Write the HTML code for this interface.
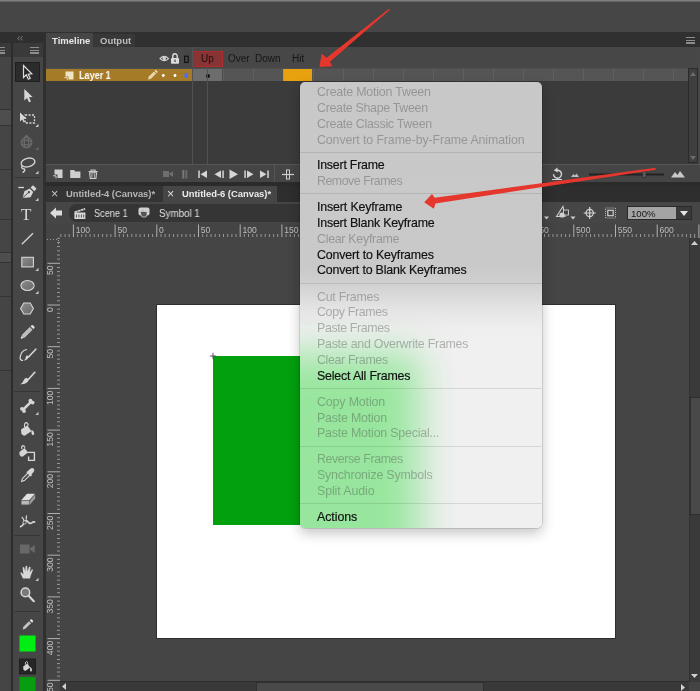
<!DOCTYPE html>
<html><head><meta charset="utf-8">
<style>
html,body{margin:0;padding:0;}
body{width:700px;height:691px;overflow:hidden;background:#444444;position:relative;font-family:"Liberation Sans",sans-serif;}
.a{position:absolute;}
.t{position:absolute;white-space:nowrap;line-height:1;will-change:transform;transform-origin:0 50%;}
svg{position:absolute;overflow:visible;}
/* menu */
#menu{left:300px;top:82px;width:242px;height:446px;border-radius:5px;overflow:hidden;box-shadow:0 5px 13px rgba(0,0,0,.24),0 0 0 0.5px rgba(0,0,0,.22);}
#menu .mi{will-change:transform;position:absolute;left:17px;font-size:12.4px;line-height:16px;height:16px;white-space:nowrap;color:#111;letter-spacing:0.05px;}
#menu .mi{-webkit-text-stroke:0.18px #111;}
#menu .d{color:rgba(60,60,60,.36);-webkit-text-stroke:0;}
#menu .sep{position:absolute;left:0;width:242px;height:1px;background:rgba(0,0,0,.10);}
</style></head><body>

<!-- top area -->
<div class="a" style="left:0;top:0;width:700px;height:32px;background:#464646"></div>
<div class="a" style="left:0;top:0;width:700px;height:2px;background:linear-gradient(#8a8a8a,#5a5a5a)"></div>

<!-- left column header -->
<div class="a" style="left:0;top:32px;width:46px;height:11px;background:#2f2f2f"></div>
<div class="a" style="left:0;top:43px;width:46px;height:14px;background:#3a3a3a"></div>
<div class="a" style="left:0;top:57px;width:11px;height:634px;background:#454545"></div>
<div class="a" style="left:11px;top:43px;width:2px;height:648px;background:#2c2c2c"></div>
<div class="a" style="left:13px;top:57px;width:30px;height:634px;background:#464646"></div>
<div class="a" style="left:43px;top:32px;width:3px;height:659px;background:#303030"></div>
<svg style="left:16.5px;top:36px" width="6.6" height="4.6" viewBox="0 0 8 6"><path d="M3 0.3 L0.8 3 L3 5.7 M6.8 0.3 L4.6 3 L6.8 5.7" fill="none" stroke="#8c8c8c" stroke-width="1.1"/></svg>

<!-- timeline panel -->
<div class="a" style="left:46px;top:32px;width:654px;height:15px;background:#303030"></div>
<div class="a" style="left:46px;top:33px;width:47px;height:14px;background:#464646"></div>
<div class="a" style="left:93px;top:34px;width:42px;height:13px;background:#383838"></div>
<div class="t" style="left:52px;top:36px;font-size:9.5px;font-weight:bold;color:#e8e8e8">Timeline</div>
<div class="t" style="left:100px;top:36px;font-size:9.5px;font-weight:bold;color:#bdbdbd">Output</div>
<div class="a" style="left:46px;top:47px;width:654px;height:22px;background:#474747"></div>
<div class="a" style="left:46px;top:69px;width:654px;height:95px;background:#3b3b3b"></div>


<!-- timeline header icons -->
<svg style="left:157px;top:52px" width="36" height="13" viewBox="0 0 36 13">
 <path d="M3 6.6 Q7.2 2 11.5 6.6 Q7.2 10.8 3 6.6Z" fill="none" stroke="#d0d0d0" stroke-width="1.2"/>
 <circle cx="7.2" cy="6.4" r="1.8" fill="#d0d0d0"/>
 <rect x="14" y="6" width="8" height="5.8" rx="0.8" fill="#dcdcdc"/>
 <path d="M15.8 6 V4 a2.2 2.2 0 0 1 4.4 0 V6" fill="none" stroke="#dcdcdc" stroke-width="1.4"/>
 <rect x="17.3" y="7.6" width="1.4" height="2.4" fill="#555"/>
 <rect x="27.6" y="4.2" width="3.6" height="6.2" fill="none" stroke="#121212" stroke-width="1.2"/>
</svg>
<!-- playhead box -->
<div class="a" style="left:192px;top:51px;width:31px;height:16px;background:#893434;border:1px solid #b02c2c;box-sizing:border-box"></div>
<div class="t" style="left:201px;top:54px;font-size:10px;color:#1c1010">Up</div>
<div class="t" style="left:228px;top:54px;font-size:10px;color:#161616">Over</div>
<div class="t" style="left:255px;top:54px;font-size:10px;color:#161616">Down</div>
<div class="t" style="left:292px;top:54px;font-size:10px;color:#161616">Hit</div>
<!-- layer row -->
<div class="a" style="left:46px;top:69px;width:146px;height:12px;background:#a67b27"></div>
<svg style="left:64px;top:71px" width="10" height="9" viewBox="0 0 10 9"><path d="M1.5 0.5 H9.5 V8.5 H4.5 V5.5 H1.5Z" fill="#efe3c6"/><path d="M0.3 6.6 H3.3 V8.8" fill="none" stroke="#efe3c6" stroke-width="0.9"/></svg>
<div class="t" style="left:78.5px;top:70.5px;font-size:10.4px;font-weight:bold;color:#fff;transform:scaleX(.87)">Layer 1</div>
<svg style="left:147px;top:69px" width="46" height="12" viewBox="0 0 46 12">
 <path d="M1 10.6 L1.8 7.6 L7 2.4 L9.2 4.6 L4 9.8Z" fill="#e8d7a8"/><path d="M7.6 1.8 L8.6 0.8 L10.8 3 L9.8 4Z" fill="#f6ecd0"/>
 <circle cx="16.3" cy="6.5" r="1.4" fill="#fff"/><circle cx="28" cy="6.5" r="1.4" fill="#fff"/>
 <rect x="37.5" y="4" width="3.6" height="5" rx="1" fill="#4f6df0"/>
</svg>
<!-- frames -->
<div class="a" style="left:192px;top:69px;width:497px;height:12px;background:#555555"></div>
<div class="a" style="left:193px;top:69px;width:29px;height:12px;background:#6d6d6d"></div>
<div class="a" style="left:283px;top:69px;width:29px;height:12px;background:#e9a20f"></div>
<div class="a" style="left:192px;top:69px;width:497px;height:12px;background:repeating-linear-gradient(90deg,rgba(0,0,0,0) 0,rgba(0,0,0,0) 29px,rgba(125,125,125,.28) 29px,rgba(125,125,125,.28) 30px);background-position:2px 0"></div>
<div class="a" style="left:222px;top:69px;width:1px;height:12px;background:#4a4a4a"></div>
<div class="a" style="left:205.5px;top:74px;width:4px;height:4px;border-radius:2px;background:#111"></div>
<div class="a" style="left:207px;top:66px;width:1px;height:98px;background:#b52626"></div>
<div class="a" style="left:192px;top:47px;width:1px;height:135px;background:#525252"></div>
<div class="a" style="left:46px;top:68px;width:654px;height:1px;background:#4f4f4f"></div>
<!-- timeline v scrollbar -->
<div class="a" style="left:688px;top:68px;width:10px;height:95px;background:#3f3f3f;border:1px solid #2b2b2b;box-sizing:border-box"></div><div class="a" style="left:698px;top:47px;width:2px;height:117px;background:#484848"></div>
<svg style="left:690px;top:72px" width="6" height="4" viewBox="0 0 6 4"><path d="M0 4 L3 0 L6 4Z" fill="#6c6c6c"/></svg>
<svg style="left:690px;top:156px" width="6" height="4" viewBox="0 0 6 4"><path d="M0 0 L3 4 L6 0Z" fill="#6c6c6c"/></svg>
<!-- panel menu icon -->
<div class="a" style="left:686px;top:36.5px;width:9px;height:7px;background:repeating-linear-gradient(#8c8c8c 0,#8c8c8c 1.4px,transparent 1.4px,transparent 2.6px)"></div>
<!-- timeline controls -->
<div class="a" style="left:46px;top:164px;width:654px;height:18px;background:#454545;border-top:1px solid #555;box-sizing:border-box"></div>
<div class="a" style="left:46px;top:182px;width:654px;height:4px;background:#2b2b2b"></div>
<div class="a" style="left:274px;top:165px;width:1px;height:17px;background:#555"></div>
<svg style="left:46px;top:164px" width="654" height="18" viewBox="0 0 654 18">
 <!-- new layer -->
 <path d="M8.5 5.5 H16.5 V14 H11.5 V10.5 H8.5Z" fill="#cfcfcf"/><path d="M7 11.8 H10 V14.4" fill="none" stroke="#cfcfcf" stroke-width="1"/>
 <!-- folder -->
 <path d="M24.2 6 H28.2 L29.2 7.5 H34.4 V14 H24.2Z" fill="#cfcfcf"/>
 <!-- trash -->
 <g transform="translate(2.6 0)"><path d="M40 7.5 H49 M42.5 7.3 V6 H46.5 V7.3" fill="none" stroke="#cfcfcf" stroke-width="1.1"/><path d="M41 8.8 H48 L47.3 14.5 H41.7Z" fill="none" stroke="#cfcfcf" stroke-width="1.1"/><path d="M43.3 9.5 V13.8 M45.7 9.5 V13.8" stroke="#cfcfcf" stroke-width="0.9"/></g>
 <!-- camera dim -->
 <path d="M117 7 H123 V13 H117Z M123.5 9.2 L127 7.2 V12.8 L123.5 10.8Z" fill="#6e6e6e"/>
 <!-- onion -->
 <rect x="136.3" y="6" width="2" height="8.5" fill="#777"/><rect x="139.3" y="6" width="2" height="8.5" fill="#6a6a6a"/>
 <!-- transport -->
 <g fill="#d6d6d6">
  <rect x="152.3" y="6.5" width="1.5" height="7.5"/><path d="M161 6.5 V14 L154.5 10.25Z"/>
  <path d="M175 6.5 V14 L168.5 10.25Z"/><rect x="176.3" y="6.5" width="1.5" height="7.5"/>
  <path d="M183.5 5.5 V15 L192 10.25Z"/>
  <rect x="198.3" y="6.5" width="1.5" height="7.5"/><path d="M201 6.5 V14 L207.5 10.25Z"/>
  <path d="M214 6.5 V14 L220.5 10.25Z"/><rect x="221.3" y="6.5" width="1.5" height="7.5"/>
 </g>
 <!-- center frame -->
 <path d="M236 10.5 H248" stroke="#cfcfcf" stroke-width="1.2"/><rect x="240.5" y="6" width="3" height="9" fill="none" stroke="#cfcfcf" stroke-width="1"/>
 <!-- loop -->
 <path d="M507.5 10.2 a4 4 0 1 0 3.6 -4 " fill="none" stroke="#d6d6d6" stroke-width="1.4"/><path d="M511.5 3.5 L507.8 6.3 L511.8 8.6Z" fill="#d6d6d6"/><path d="M506 15.5 H516" stroke="#d6d6d6" stroke-width="1"/>
 <!-- mountains -->
 <path d="M525 13 L527.5 10 L529 11.5 L530.5 9.5 L533 13Z" fill="#bdbdbd"/>
 <rect x="543" y="9.5" width="75" height="2" fill="#222"/>
 <rect x="596.5" y="7.5" width="3.5" height="6" fill="#5a5a5a" stroke="#2a2a2a" stroke-width="0.6"/>
 <path d="M625 13.5 L629 8 L631.5 11 L634 7 L639 13.5Z" fill="#c9c9c9"/>
</svg>

<!-- doc tabs -->
<div class="a" style="left:46px;top:186px;width:654px;height:16px;background:#2e2e2e"></div>
<div class="a" style="left:46px;top:186px;width:117px;height:16px;background:#343434"></div>
<div class="a" style="left:163px;top:186px;width:114px;height:16px;background:#464646"></div>
<div class="t" style="left:51px;top:188px;font-size:12.5px;color:#c8c8c8">×</div>
<div class="t" style="left:66px;top:189px;font-size:9.4px;font-weight:bold;color:#b6b6b6">Untitled-4 (Canvas)*</div>
<div class="t" style="left:167px;top:188px;font-size:12.5px;color:#dcdcdc">×</div>
<div class="t" style="left:182px;top:189px;font-size:9.4px;font-weight:bold;color:#ececec">Untitled-6 (Canvas)*</div>

<!-- edit bar -->
<div class="a" style="left:46px;top:202px;width:654px;height:21px;background:#464646"></div>
<div class="a" style="left:69px;top:204px;width:465px;height:18px;background:#353535;border-radius:8px 0 0 8px"></div>
<svg style="left:46px;top:202px" width="654" height="21" viewBox="0 0 654 21">
 <path d="M4 11 L10 5.5 V8.5 H16 V13.5 H10 V16.5Z" fill="#dcdcdc"/>
 <!-- clapper -->
 <g transform="translate(-3.6 0)"><path d="M32 10.5 H43 V17 H32Z" fill="#dadada"/><path d="M32 9.5 L42.5 6 L43 7.8 L32.4 11Z" fill="#dadada"/><path d="M34 12.5 V15.5 M36.5 12.5 V15.5 M39 12.5 V15.5 M41.3 12.5 V15.5" stroke="#353535" stroke-width="0.8"/>
 <path d="M34.5 8.3 L35.8 9.8 M37.5 7.3 L38.8 8.8 M40.3 6.4 L41.5 7.8" stroke="#353535" stroke-width="0.9"/></g>
 <!-- symbol btn -->
 <g transform="translate(-2 0)"><rect x="94.5" y="5.5" width="11" height="8" rx="2" fill="#d0d0d0"/><path d="M97 13 q-1.5 -3 0.5 -4 l1 1 v-3 h1 v2.5 h3.5 v3 l-1 2.5 h-4Z" fill="#555" stroke="#d8d8d8" stroke-width="0.7"/></g>
</svg>
<div class="t" style="left:94px;top:209px;font-size:10.2px;color:#e0e0e0;transform:scaleX(.9)">Scene 1</div>
<div class="t" style="left:159px;top:209px;font-size:10.2px;color:#e0e0e0;transform:scaleX(.96)">Symbol 1</div>
<!-- rulers -->
<div class="a" style="left:46px;top:223px;width:654px;height:15px;background:#444"></div>
<div class="a" style="left:46px;top:237px;width:14px;height:454px;background:#444"></div>
<svg style="left:46px;top:223px;will-change:transform" width="654" height="15" viewBox="46 0 654 15"><path d="M60.9 11 V15" stroke="#a6a6a6" stroke-width="0.85"/><path d="M65.1 11 V15" stroke="#a6a6a6" stroke-width="0.85"/><path d="M69.2 11 V15" stroke="#a6a6a6" stroke-width="0.85"/><path d="M73.4 1.5 V15" stroke="#bcbcbc" stroke-width="0.9"/><text x="75.7" y="9.5" font-size="8.6" fill="#bebebe" font-family="Liberation Sans, sans-serif">100</text><path d="M77.6 11 V15" stroke="#a6a6a6" stroke-width="0.85"/><path d="M81.7 11 V15" stroke="#a6a6a6" stroke-width="0.85"/><path d="M85.9 11 V15" stroke="#a6a6a6" stroke-width="0.85"/><path d="M90.1 11 V15" stroke="#a6a6a6" stroke-width="0.85"/><path d="M94.3 11 V15" stroke="#a6a6a6" stroke-width="0.85"/><path d="M98.4 11 V15" stroke="#a6a6a6" stroke-width="0.85"/><path d="M102.6 11 V15" stroke="#a6a6a6" stroke-width="0.85"/><path d="M106.8 11 V15" stroke="#a6a6a6" stroke-width="0.85"/><path d="M110.9 11 V15" stroke="#a6a6a6" stroke-width="0.85"/><path d="M115.1 1.5 V15" stroke="#bcbcbc" stroke-width="0.9"/><text x="117.4" y="9.5" font-size="8.6" fill="#bebebe" font-family="Liberation Sans, sans-serif">50</text><path d="M119.3 11 V15" stroke="#a6a6a6" stroke-width="0.85"/><path d="M123.4 11 V15" stroke="#a6a6a6" stroke-width="0.85"/><path d="M127.6 11 V15" stroke="#a6a6a6" stroke-width="0.85"/><path d="M131.8 11 V15" stroke="#a6a6a6" stroke-width="0.85"/><path d="M136.0 11 V15" stroke="#a6a6a6" stroke-width="0.85"/><path d="M140.1 11 V15" stroke="#a6a6a6" stroke-width="0.85"/><path d="M144.3 11 V15" stroke="#a6a6a6" stroke-width="0.85"/><path d="M148.5 11 V15" stroke="#a6a6a6" stroke-width="0.85"/><path d="M152.6 11 V15" stroke="#a6a6a6" stroke-width="0.85"/><path d="M156.8 1.5 V15" stroke="#bcbcbc" stroke-width="0.9"/><text x="159.1" y="9.5" font-size="8.6" fill="#bebebe" font-family="Liberation Sans, sans-serif">0</text><path d="M161.0 11 V15" stroke="#a6a6a6" stroke-width="0.85"/><path d="M165.1 11 V15" stroke="#a6a6a6" stroke-width="0.85"/><path d="M169.3 11 V15" stroke="#a6a6a6" stroke-width="0.85"/><path d="M173.5 11 V15" stroke="#a6a6a6" stroke-width="0.85"/><path d="M177.7 11 V15" stroke="#a6a6a6" stroke-width="0.85"/><path d="M181.8 11 V15" stroke="#a6a6a6" stroke-width="0.85"/><path d="M186.0 11 V15" stroke="#a6a6a6" stroke-width="0.85"/><path d="M190.2 11 V15" stroke="#a6a6a6" stroke-width="0.85"/><path d="M194.3 11 V15" stroke="#a6a6a6" stroke-width="0.85"/><path d="M198.5 1.5 V15" stroke="#bcbcbc" stroke-width="0.9"/><text x="200.8" y="9.5" font-size="8.6" fill="#bebebe" font-family="Liberation Sans, sans-serif">50</text><path d="M202.7 11 V15" stroke="#a6a6a6" stroke-width="0.85"/><path d="M206.8 11 V15" stroke="#a6a6a6" stroke-width="0.85"/><path d="M211.0 11 V15" stroke="#a6a6a6" stroke-width="0.85"/><path d="M215.2 11 V15" stroke="#a6a6a6" stroke-width="0.85"/><path d="M219.4 11 V15" stroke="#a6a6a6" stroke-width="0.85"/><path d="M223.5 11 V15" stroke="#a6a6a6" stroke-width="0.85"/><path d="M227.7 11 V15" stroke="#a6a6a6" stroke-width="0.85"/><path d="M231.9 11 V15" stroke="#a6a6a6" stroke-width="0.85"/><path d="M236.0 11 V15" stroke="#a6a6a6" stroke-width="0.85"/><path d="M240.2 1.5 V15" stroke="#bcbcbc" stroke-width="0.9"/><text x="242.5" y="9.5" font-size="8.6" fill="#bebebe" font-family="Liberation Sans, sans-serif">100</text><path d="M244.4 11 V15" stroke="#a6a6a6" stroke-width="0.85"/><path d="M248.5 11 V15" stroke="#a6a6a6" stroke-width="0.85"/><path d="M252.7 11 V15" stroke="#a6a6a6" stroke-width="0.85"/><path d="M256.9 11 V15" stroke="#a6a6a6" stroke-width="0.85"/><path d="M261.1 11 V15" stroke="#a6a6a6" stroke-width="0.85"/><path d="M265.2 11 V15" stroke="#a6a6a6" stroke-width="0.85"/><path d="M269.4 11 V15" stroke="#a6a6a6" stroke-width="0.85"/><path d="M273.6 11 V15" stroke="#a6a6a6" stroke-width="0.85"/><path d="M277.7 11 V15" stroke="#a6a6a6" stroke-width="0.85"/><path d="M281.9 1.5 V15" stroke="#bcbcbc" stroke-width="0.9"/><text x="284.2" y="9.5" font-size="8.6" fill="#bebebe" font-family="Liberation Sans, sans-serif">150</text><path d="M286.1 11 V15" stroke="#a6a6a6" stroke-width="0.85"/><path d="M290.2 11 V15" stroke="#a6a6a6" stroke-width="0.85"/><path d="M294.4 11 V15" stroke="#a6a6a6" stroke-width="0.85"/><path d="M298.6 11 V15" stroke="#a6a6a6" stroke-width="0.85"/><path d="M302.8 11 V15" stroke="#a6a6a6" stroke-width="0.85"/><path d="M306.9 11 V15" stroke="#a6a6a6" stroke-width="0.85"/><path d="M311.1 11 V15" stroke="#a6a6a6" stroke-width="0.85"/><path d="M315.3 11 V15" stroke="#a6a6a6" stroke-width="0.85"/><path d="M319.4 11 V15" stroke="#a6a6a6" stroke-width="0.85"/><path d="M323.6 1.5 V15" stroke="#bcbcbc" stroke-width="0.9"/><text x="325.9" y="9.5" font-size="8.6" fill="#bebebe" font-family="Liberation Sans, sans-serif">200</text><path d="M327.8 11 V15" stroke="#a6a6a6" stroke-width="0.85"/><path d="M331.9 11 V15" stroke="#a6a6a6" stroke-width="0.85"/><path d="M336.1 11 V15" stroke="#a6a6a6" stroke-width="0.85"/><path d="M340.3 11 V15" stroke="#a6a6a6" stroke-width="0.85"/><path d="M344.5 11 V15" stroke="#a6a6a6" stroke-width="0.85"/><path d="M348.6 11 V15" stroke="#a6a6a6" stroke-width="0.85"/><path d="M352.8 11 V15" stroke="#a6a6a6" stroke-width="0.85"/><path d="M357.0 11 V15" stroke="#a6a6a6" stroke-width="0.85"/><path d="M361.1 11 V15" stroke="#a6a6a6" stroke-width="0.85"/><path d="M365.3 1.5 V15" stroke="#bcbcbc" stroke-width="0.9"/><text x="367.6" y="9.5" font-size="8.6" fill="#bebebe" font-family="Liberation Sans, sans-serif">250</text><path d="M369.5 11 V15" stroke="#a6a6a6" stroke-width="0.85"/><path d="M373.6 11 V15" stroke="#a6a6a6" stroke-width="0.85"/><path d="M377.8 11 V15" stroke="#a6a6a6" stroke-width="0.85"/><path d="M382.0 11 V15" stroke="#a6a6a6" stroke-width="0.85"/><path d="M386.1 11 V15" stroke="#a6a6a6" stroke-width="0.85"/><path d="M390.3 11 V15" stroke="#a6a6a6" stroke-width="0.85"/><path d="M394.5 11 V15" stroke="#a6a6a6" stroke-width="0.85"/><path d="M398.7 11 V15" stroke="#a6a6a6" stroke-width="0.85"/><path d="M402.8 11 V15" stroke="#a6a6a6" stroke-width="0.85"/><path d="M407.0 1.5 V15" stroke="#bcbcbc" stroke-width="0.9"/><text x="409.3" y="9.5" font-size="8.6" fill="#bebebe" font-family="Liberation Sans, sans-serif">300</text><path d="M411.2 11 V15" stroke="#a6a6a6" stroke-width="0.85"/><path d="M415.3 11 V15" stroke="#a6a6a6" stroke-width="0.85"/><path d="M419.5 11 V15" stroke="#a6a6a6" stroke-width="0.85"/><path d="M423.7 11 V15" stroke="#a6a6a6" stroke-width="0.85"/><path d="M427.9 11 V15" stroke="#a6a6a6" stroke-width="0.85"/><path d="M432.0 11 V15" stroke="#a6a6a6" stroke-width="0.85"/><path d="M436.2 11 V15" stroke="#a6a6a6" stroke-width="0.85"/><path d="M440.4 11 V15" stroke="#a6a6a6" stroke-width="0.85"/><path d="M444.5 11 V15" stroke="#a6a6a6" stroke-width="0.85"/><path d="M448.7 1.5 V15" stroke="#bcbcbc" stroke-width="0.9"/><text x="451.0" y="9.5" font-size="8.6" fill="#bebebe" font-family="Liberation Sans, sans-serif">350</text><path d="M452.9 11 V15" stroke="#a6a6a6" stroke-width="0.85"/><path d="M457.0 11 V15" stroke="#a6a6a6" stroke-width="0.85"/><path d="M461.2 11 V15" stroke="#a6a6a6" stroke-width="0.85"/><path d="M465.4 11 V15" stroke="#a6a6a6" stroke-width="0.85"/><path d="M469.6 11 V15" stroke="#a6a6a6" stroke-width="0.85"/><path d="M473.7 11 V15" stroke="#a6a6a6" stroke-width="0.85"/><path d="M477.9 11 V15" stroke="#a6a6a6" stroke-width="0.85"/><path d="M482.1 11 V15" stroke="#a6a6a6" stroke-width="0.85"/><path d="M486.2 11 V15" stroke="#a6a6a6" stroke-width="0.85"/><path d="M490.4 1.5 V15" stroke="#bcbcbc" stroke-width="0.9"/><text x="492.7" y="9.5" font-size="8.6" fill="#bebebe" font-family="Liberation Sans, sans-serif">400</text><path d="M494.6 11 V15" stroke="#a6a6a6" stroke-width="0.85"/><path d="M498.7 11 V15" stroke="#a6a6a6" stroke-width="0.85"/><path d="M502.9 11 V15" stroke="#a6a6a6" stroke-width="0.85"/><path d="M507.1 11 V15" stroke="#a6a6a6" stroke-width="0.85"/><path d="M511.2 11 V15" stroke="#a6a6a6" stroke-width="0.85"/><path d="M515.4 11 V15" stroke="#a6a6a6" stroke-width="0.85"/><path d="M519.6 11 V15" stroke="#a6a6a6" stroke-width="0.85"/><path d="M523.8 11 V15" stroke="#a6a6a6" stroke-width="0.85"/><path d="M527.9 11 V15" stroke="#a6a6a6" stroke-width="0.85"/><path d="M532.1 1.5 V15" stroke="#bcbcbc" stroke-width="0.9"/><text x="534.4" y="9.5" font-size="8.6" fill="#bebebe" font-family="Liberation Sans, sans-serif">450</text><path d="M536.3 11 V15" stroke="#a6a6a6" stroke-width="0.85"/><path d="M540.4 11 V15" stroke="#a6a6a6" stroke-width="0.85"/><path d="M544.6 11 V15" stroke="#a6a6a6" stroke-width="0.85"/><path d="M548.8 11 V15" stroke="#a6a6a6" stroke-width="0.85"/><path d="M553.0 11 V15" stroke="#a6a6a6" stroke-width="0.85"/><path d="M557.1 11 V15" stroke="#a6a6a6" stroke-width="0.85"/><path d="M561.3 11 V15" stroke="#a6a6a6" stroke-width="0.85"/><path d="M565.5 11 V15" stroke="#a6a6a6" stroke-width="0.85"/><path d="M569.6 11 V15" stroke="#a6a6a6" stroke-width="0.85"/><path d="M573.8 1.5 V15" stroke="#bcbcbc" stroke-width="0.9"/><text x="576.1" y="9.5" font-size="8.6" fill="#bebebe" font-family="Liberation Sans, sans-serif">500</text><path d="M578.0 11 V15" stroke="#a6a6a6" stroke-width="0.85"/><path d="M582.1 11 V15" stroke="#a6a6a6" stroke-width="0.85"/><path d="M586.3 11 V15" stroke="#a6a6a6" stroke-width="0.85"/><path d="M590.5 11 V15" stroke="#a6a6a6" stroke-width="0.85"/><path d="M594.6 11 V15" stroke="#a6a6a6" stroke-width="0.85"/><path d="M598.8 11 V15" stroke="#a6a6a6" stroke-width="0.85"/><path d="M603.0 11 V15" stroke="#a6a6a6" stroke-width="0.85"/><path d="M607.2 11 V15" stroke="#a6a6a6" stroke-width="0.85"/><path d="M611.3 11 V15" stroke="#a6a6a6" stroke-width="0.85"/><path d="M615.5 1.5 V15" stroke="#bcbcbc" stroke-width="0.9"/><text x="617.8" y="9.5" font-size="8.6" fill="#bebebe" font-family="Liberation Sans, sans-serif">550</text><path d="M619.7 11 V15" stroke="#a6a6a6" stroke-width="0.85"/><path d="M623.8 11 V15" stroke="#a6a6a6" stroke-width="0.85"/><path d="M628.0 11 V15" stroke="#a6a6a6" stroke-width="0.85"/><path d="M632.2 11 V15" stroke="#a6a6a6" stroke-width="0.85"/><path d="M636.3 11 V15" stroke="#a6a6a6" stroke-width="0.85"/><path d="M640.5 11 V15" stroke="#a6a6a6" stroke-width="0.85"/><path d="M644.7 11 V15" stroke="#a6a6a6" stroke-width="0.85"/><path d="M648.9 11 V15" stroke="#a6a6a6" stroke-width="0.85"/><path d="M653.0 11 V15" stroke="#a6a6a6" stroke-width="0.85"/><path d="M657.2 1.5 V15" stroke="#bcbcbc" stroke-width="0.9"/><text x="659.5" y="9.5" font-size="8.6" fill="#bebebe" font-family="Liberation Sans, sans-serif">600</text><path d="M661.4 11 V15" stroke="#a6a6a6" stroke-width="0.85"/><path d="M665.5 11 V15" stroke="#a6a6a6" stroke-width="0.85"/><path d="M669.7 11 V15" stroke="#a6a6a6" stroke-width="0.85"/><path d="M673.9 11 V15" stroke="#a6a6a6" stroke-width="0.85"/><path d="M678.0 11 V15" stroke="#a6a6a6" stroke-width="0.85"/><path d="M682.2 11 V15" stroke="#a6a6a6" stroke-width="0.85"/><path d="M686.4 11 V15" stroke="#a6a6a6" stroke-width="0.85"/><path d="M690.6 11 V15" stroke="#a6a6a6" stroke-width="0.85"/><path d="M694.7 11 V15" stroke="#a6a6a6" stroke-width="0.85"/><path d="M698.9 1.5 V15" stroke="#bcbcbc" stroke-width="0.9"/><text x="701.2" y="9.5" font-size="8.6" fill="#bebebe" font-family="Liberation Sans, sans-serif">650</text></svg>
<svg style="left:46px;top:237px;will-change:transform" width="14" height="454" viewBox="0 237 14 454"><path d="M11 238.3 H14" stroke="#a6a6a6" stroke-width="0.85"/><path d="M11 242.4 H14" stroke="#a6a6a6" stroke-width="0.85"/><path d="M11 246.6 H14" stroke="#a6a6a6" stroke-width="0.85"/><path d="M11 250.8 H14" stroke="#a6a6a6" stroke-width="0.85"/><path d="M11 255.0 H14" stroke="#a6a6a6" stroke-width="0.85"/><path d="M11 259.1 H14" stroke="#a6a6a6" stroke-width="0.85"/><path d="M1.5 263.3 H14" stroke="#bcbcbc" stroke-width="0.9"/><text transform="translate(7.1 265.5) rotate(-90)" text-anchor="end" font-size="8.6" fill="#bebebe" font-family="Liberation Sans, sans-serif">50</text><path d="M11 267.5 H14" stroke="#a6a6a6" stroke-width="0.85"/><path d="M11 271.6 H14" stroke="#a6a6a6" stroke-width="0.85"/><path d="M11 275.8 H14" stroke="#a6a6a6" stroke-width="0.85"/><path d="M11 280.0 H14" stroke="#a6a6a6" stroke-width="0.85"/><path d="M11 284.1 H14" stroke="#a6a6a6" stroke-width="0.85"/><path d="M11 288.3 H14" stroke="#a6a6a6" stroke-width="0.85"/><path d="M11 292.5 H14" stroke="#a6a6a6" stroke-width="0.85"/><path d="M11 296.7 H14" stroke="#a6a6a6" stroke-width="0.85"/><path d="M11 300.8 H14" stroke="#a6a6a6" stroke-width="0.85"/><path d="M1.5 305.0 H14" stroke="#bcbcbc" stroke-width="0.9"/><text transform="translate(7.1 307.2) rotate(-90)" text-anchor="end" font-size="8.6" fill="#bebebe" font-family="Liberation Sans, sans-serif">0</text><path d="M11 309.2 H14" stroke="#a6a6a6" stroke-width="0.85"/><path d="M11 313.3 H14" stroke="#a6a6a6" stroke-width="0.85"/><path d="M11 317.5 H14" stroke="#a6a6a6" stroke-width="0.85"/><path d="M11 321.7 H14" stroke="#a6a6a6" stroke-width="0.85"/><path d="M11 325.9 H14" stroke="#a6a6a6" stroke-width="0.85"/><path d="M11 330.0 H14" stroke="#a6a6a6" stroke-width="0.85"/><path d="M11 334.2 H14" stroke="#a6a6a6" stroke-width="0.85"/><path d="M11 338.4 H14" stroke="#a6a6a6" stroke-width="0.85"/><path d="M11 342.5 H14" stroke="#a6a6a6" stroke-width="0.85"/><path d="M1.5 346.7 H14" stroke="#bcbcbc" stroke-width="0.9"/><text transform="translate(7.1 348.9) rotate(-90)" text-anchor="end" font-size="8.6" fill="#bebebe" font-family="Liberation Sans, sans-serif">50</text><path d="M11 350.9 H14" stroke="#a6a6a6" stroke-width="0.85"/><path d="M11 355.0 H14" stroke="#a6a6a6" stroke-width="0.85"/><path d="M11 359.2 H14" stroke="#a6a6a6" stroke-width="0.85"/><path d="M11 363.4 H14" stroke="#a6a6a6" stroke-width="0.85"/><path d="M11 367.6 H14" stroke="#a6a6a6" stroke-width="0.85"/><path d="M11 371.7 H14" stroke="#a6a6a6" stroke-width="0.85"/><path d="M11 375.9 H14" stroke="#a6a6a6" stroke-width="0.85"/><path d="M11 380.1 H14" stroke="#a6a6a6" stroke-width="0.85"/><path d="M11 384.2 H14" stroke="#a6a6a6" stroke-width="0.85"/><path d="M1.5 388.4 H14" stroke="#bcbcbc" stroke-width="0.9"/><text transform="translate(7.1 390.6) rotate(-90)" text-anchor="end" font-size="8.6" fill="#bebebe" font-family="Liberation Sans, sans-serif">100</text><path d="M11 392.6 H14" stroke="#a6a6a6" stroke-width="0.85"/><path d="M11 396.7 H14" stroke="#a6a6a6" stroke-width="0.85"/><path d="M11 400.9 H14" stroke="#a6a6a6" stroke-width="0.85"/><path d="M11 405.1 H14" stroke="#a6a6a6" stroke-width="0.85"/><path d="M11 409.2 H14" stroke="#a6a6a6" stroke-width="0.85"/><path d="M11 413.4 H14" stroke="#a6a6a6" stroke-width="0.85"/><path d="M11 417.6 H14" stroke="#a6a6a6" stroke-width="0.85"/><path d="M11 421.8 H14" stroke="#a6a6a6" stroke-width="0.85"/><path d="M11 425.9 H14" stroke="#a6a6a6" stroke-width="0.85"/><path d="M1.5 430.1 H14" stroke="#bcbcbc" stroke-width="0.9"/><text transform="translate(7.1 432.3) rotate(-90)" text-anchor="end" font-size="8.6" fill="#bebebe" font-family="Liberation Sans, sans-serif">150</text><path d="M11 434.3 H14" stroke="#a6a6a6" stroke-width="0.85"/><path d="M11 438.4 H14" stroke="#a6a6a6" stroke-width="0.85"/><path d="M11 442.6 H14" stroke="#a6a6a6" stroke-width="0.85"/><path d="M11 446.8 H14" stroke="#a6a6a6" stroke-width="0.85"/><path d="M11 450.9 H14" stroke="#a6a6a6" stroke-width="0.85"/><path d="M11 455.1 H14" stroke="#a6a6a6" stroke-width="0.85"/><path d="M11 459.3 H14" stroke="#a6a6a6" stroke-width="0.85"/><path d="M11 463.5 H14" stroke="#a6a6a6" stroke-width="0.85"/><path d="M11 467.6 H14" stroke="#a6a6a6" stroke-width="0.85"/><path d="M1.5 471.8 H14" stroke="#bcbcbc" stroke-width="0.9"/><text transform="translate(7.1 474.0) rotate(-90)" text-anchor="end" font-size="8.6" fill="#bebebe" font-family="Liberation Sans, sans-serif">200</text><path d="M11 476.0 H14" stroke="#a6a6a6" stroke-width="0.85"/><path d="M11 480.1 H14" stroke="#a6a6a6" stroke-width="0.85"/><path d="M11 484.3 H14" stroke="#a6a6a6" stroke-width="0.85"/><path d="M11 488.5 H14" stroke="#a6a6a6" stroke-width="0.85"/><path d="M11 492.6 H14" stroke="#a6a6a6" stroke-width="0.85"/><path d="M11 496.8 H14" stroke="#a6a6a6" stroke-width="0.85"/><path d="M11 501.0 H14" stroke="#a6a6a6" stroke-width="0.85"/><path d="M11 505.2 H14" stroke="#a6a6a6" stroke-width="0.85"/><path d="M11 509.3 H14" stroke="#a6a6a6" stroke-width="0.85"/><path d="M1.5 513.5 H14" stroke="#bcbcbc" stroke-width="0.9"/><text transform="translate(7.1 515.7) rotate(-90)" text-anchor="end" font-size="8.6" fill="#bebebe" font-family="Liberation Sans, sans-serif">250</text><path d="M11 517.7 H14" stroke="#a6a6a6" stroke-width="0.85"/><path d="M11 521.8 H14" stroke="#a6a6a6" stroke-width="0.85"/><path d="M11 526.0 H14" stroke="#a6a6a6" stroke-width="0.85"/><path d="M11 530.2 H14" stroke="#a6a6a6" stroke-width="0.85"/><path d="M11 534.4 H14" stroke="#a6a6a6" stroke-width="0.85"/><path d="M11 538.5 H14" stroke="#a6a6a6" stroke-width="0.85"/><path d="M11 542.7 H14" stroke="#a6a6a6" stroke-width="0.85"/><path d="M11 546.9 H14" stroke="#a6a6a6" stroke-width="0.85"/><path d="M11 551.0 H14" stroke="#a6a6a6" stroke-width="0.85"/><path d="M1.5 555.2 H14" stroke="#bcbcbc" stroke-width="0.9"/><text transform="translate(7.1 557.4) rotate(-90)" text-anchor="end" font-size="8.6" fill="#bebebe" font-family="Liberation Sans, sans-serif">300</text><path d="M11 559.4 H14" stroke="#a6a6a6" stroke-width="0.85"/><path d="M11 563.5 H14" stroke="#a6a6a6" stroke-width="0.85"/><path d="M11 567.7 H14" stroke="#a6a6a6" stroke-width="0.85"/><path d="M11 571.9 H14" stroke="#a6a6a6" stroke-width="0.85"/><path d="M11 576.0 H14" stroke="#a6a6a6" stroke-width="0.85"/><path d="M11 580.2 H14" stroke="#a6a6a6" stroke-width="0.85"/><path d="M11 584.4 H14" stroke="#a6a6a6" stroke-width="0.85"/><path d="M11 588.6 H14" stroke="#a6a6a6" stroke-width="0.85"/><path d="M11 592.7 H14" stroke="#a6a6a6" stroke-width="0.85"/><path d="M1.5 596.9 H14" stroke="#bcbcbc" stroke-width="0.9"/><text transform="translate(7.1 599.1) rotate(-90)" text-anchor="end" font-size="8.6" fill="#bebebe" font-family="Liberation Sans, sans-serif">350</text><path d="M11 601.1 H14" stroke="#a6a6a6" stroke-width="0.85"/><path d="M11 605.2 H14" stroke="#a6a6a6" stroke-width="0.85"/><path d="M11 609.4 H14" stroke="#a6a6a6" stroke-width="0.85"/><path d="M11 613.6 H14" stroke="#a6a6a6" stroke-width="0.85"/><path d="M11 617.8 H14" stroke="#a6a6a6" stroke-width="0.85"/><path d="M11 621.9 H14" stroke="#a6a6a6" stroke-width="0.85"/><path d="M11 626.1 H14" stroke="#a6a6a6" stroke-width="0.85"/><path d="M11 630.3 H14" stroke="#a6a6a6" stroke-width="0.85"/><path d="M11 634.4 H14" stroke="#a6a6a6" stroke-width="0.85"/><path d="M1.5 638.6 H14" stroke="#bcbcbc" stroke-width="0.9"/><text transform="translate(7.1 640.8) rotate(-90)" text-anchor="end" font-size="8.6" fill="#bebebe" font-family="Liberation Sans, sans-serif">400</text><path d="M11 642.8 H14" stroke="#a6a6a6" stroke-width="0.85"/><path d="M11 646.9 H14" stroke="#a6a6a6" stroke-width="0.85"/><path d="M11 651.1 H14" stroke="#a6a6a6" stroke-width="0.85"/><path d="M11 655.3 H14" stroke="#a6a6a6" stroke-width="0.85"/><path d="M11 659.5 H14" stroke="#a6a6a6" stroke-width="0.85"/><path d="M11 663.6 H14" stroke="#a6a6a6" stroke-width="0.85"/><path d="M11 667.8 H14" stroke="#a6a6a6" stroke-width="0.85"/><path d="M11 672.0 H14" stroke="#a6a6a6" stroke-width="0.85"/><path d="M11 676.1 H14" stroke="#a6a6a6" stroke-width="0.85"/><path d="M1.5 680.3 H14" stroke="#bcbcbc" stroke-width="0.9"/><text transform="translate(7.1 682.5) rotate(-90)" text-anchor="end" font-size="8.6" fill="#bebebe" font-family="Liberation Sans, sans-serif">450</text></svg>

<svg style="left:46px;top:237px" width="14" height="10" viewBox="0 0 14 10"><path d="M1 2.5 H13" stroke="#a6a6a6" stroke-width="0.9" stroke-dasharray="1 2"/><path d="M12.5 3 V9" stroke="#a6a6a6" stroke-width="0.9" stroke-dasharray="1 2"/></svg>
<!-- pasteboard/stage -->
<div class="a" style="left:60px;top:237px;width:629px;height:445px;background:#454545"></div>
<div class="a" style="left:156px;top:304px;width:460px;height:335px;background:#2e2e2e"></div>
<div class="a" style="left:157px;top:305px;width:458px;height:333px;background:#ffffff"></div>
<div class="a" style="left:213px;top:356px;width:167px;height:169px;background:#02a00e"></div>
<svg style="left:208.5px;top:351.5px" width="8" height="8" viewBox="0 0 8 8"><path d="M4 0.8 V7.2 M0.8 4 H7.2" stroke="#54404e" stroke-width="0.9"/></svg>
<!-- stage scrollbars -->
<div class="a" style="left:689px;top:238px;width:11px;height:444px;background:#3a3a3a;border-left:1px solid #303030;box-sizing:border-box"></div>
<div class="a" style="left:690px;top:397px;width:10px;height:118px;background:#494949;border:1px solid #303030;border-right:0;box-sizing:border-box"></div>
<svg style="left:691px;top:241px" width="7" height="4" viewBox="0 0 7 4"><path d="M0 4 L3.5 0 L7 4Z" fill="#d0d0d0"/></svg>
<svg style="left:691px;top:674px" width="7" height="4" viewBox="0 0 7 4"><path d="M0 0 L3.5 4 L7 0Z" fill="#d0d0d0"/></svg>
<div class="a" style="left:60px;top:681px;width:629px;height:10px;background:#393939;border-top:1px solid #2e2e2e;box-sizing:border-box"></div>
<div class="a" style="left:256px;top:682px;width:228px;height:9px;background:#494949;border:1px solid #303030;border-bottom:0;box-sizing:border-box"></div>
<svg style="left:62px;top:683px" width="4" height="7" viewBox="0 0 4 7"><path d="M4 0 L0 3.5 L4 7Z" fill="#d0d0d0"/></svg>
<svg style="left:681px;top:684px" width="4" height="7" viewBox="0 0 4 7"><path d="M0 0 L4 3.5 L0 7Z" fill="#d0d0d0"/></svg>
<div class="a" style="left:689px;top:682px;width:11px;height:9px;background:#444"></div>

<!-- tools panel -->
<div class="a" style="left:30px;top:47px;width:9px;height:7px;background:repeating-linear-gradient(#8e8e8e 0,#8e8e8e 1.4px,transparent 1.4px,transparent 2.6px)"></div>
<div class="a" style="left:0px;top:47px;width:5px;height:7px;background:repeating-linear-gradient(#8e8e8e 0,#8e8e8e 1.4px,transparent 1.4px,transparent 2.6px)"></div>
<div class="a" style="left:0;top:109px;width:11px;height:17px;background:#4e4e4e;border-top:1px solid #333;border-bottom:1px solid #333;box-sizing:border-box"></div>
<div class="a" style="left:0;top:169px;width:11px;height:1px;background:#343434"></div>
<div class="a" style="left:0;top:219px;width:11px;height:1px;background:#343434"></div>
<div class="a" style="left:0;top:252px;width:11px;height:11px;background:#4e4e4e;border-top:1px solid #333;border-bottom:1px solid #333;box-sizing:border-box"></div>
<div class="a" style="left:0;top:296px;width:11px;height:1px;background:#343434"></div>
<div class="a" style="left:0;top:370px;width:11px;height:1px;background:#343434"></div>
<div class="a" style="left:15px;top:62px;width:25px;height:20px;background:#2c2c2c;border:1px solid #1f1f1f;box-sizing:border-box"></div>
<svg style="left:0;top:0" width="46" height="691" viewBox="0 0 46 691">
 <g stroke="#363636" stroke-width="1"><path d="M14 177.5 H40 M14 391.5 H40 M14 535.5 H40 M14 611.5 H40"/></g>
 <!-- selection -->
 <path d="M23.5 65.5 V77.5 L26.3 74.8 L28.3 79.2 L30.2 78.3 L28.2 74.2 L31.8 73.8Z" fill="#262626" stroke="#dcdcdc" stroke-width="1.2" stroke-linejoin="miter"/>
 <!-- subselection -->
 <path d="M24.3 89 V100.5 L27 98 L29 102.3 L31 101.4 L29 97.3 L32.6 97Z" fill="#d6d6d6"/>
 <!-- free transform -->
 <path d="M20 112.5 V121.5 L22.3 119.6 L23.6 122.4 L25 121.8 L23.7 119 L26.5 118.6Z" fill="#d6d6d6"/>
 <rect x="25.2" y="115" width="9.3" height="8" fill="none" stroke="#d6d6d6" stroke-width="1.3" stroke-dasharray="2 1.4"/>
 <path d="M38.5 123.8 V127 H35.3Z" fill="#c8c8c8"/>
 <!-- 3d rotation dim -->
 <g fill="none" stroke="#6a6a6a" stroke-width="1.3"><circle cx="26.5" cy="142.5" r="5.2"/><ellipse cx="26.5" cy="142.5" rx="5.2" ry="2.2"/><ellipse cx="26.5" cy="142.5" rx="2.2" ry="5.2"/><path d="M26.5 134.5 L29 137 L24 137Z" fill="#6a6a6a" stroke="none"/></g>
 <path d="M38.5 147 V150 H35.5Z" fill="#6a6a6a"/>
 <!-- lasso -->
 <g fill="none" stroke="#d2d2d2" stroke-width="1.4"><ellipse cx="28" cy="162.5" rx="7" ry="4.3" transform="rotate(-14 28 162.5)"/><path d="M22.5 165.5 q-2 2.5 0.8 3.2 q2.2 0.3 1.2 2.2 q-0.8 1.2 -2 1.6"/></g>
 <path d="M38.5 170.8 V174 H35.3Z" fill="#c8c8c8"/>
 <!-- pen -->
 <path d="M18.3 187.5 H24" stroke="#d6d6d6" stroke-width="1.3"/>
 <path d="M22.6 198 L24.4 191.2 L29.8 188.6 L33.2 192 L30.6 197.2Z" fill="#d6d6d6"/><path d="M30.6 187.6 L33 185.2 L36.6 188.8 L34.2 191.2Z" fill="#d6d6d6"/><path d="M22.8 197.8 L28.4 192.6" stroke="#444" stroke-width="0.9"/><circle cx="28.9" cy="192.2" r="1.1" fill="#444"/>
 <path d="M38.5 197.8 V201 H35.3Z" fill="#c8c8c8"/>
 <!-- line -->
 <path d="M21.8 244.3 L33 233.3" stroke="#d6d6d6" stroke-width="1.3"/>
 <!-- rect -->
 <defs><linearGradient id="gg" x1="0" y1="0" x2="1" y2="1"><stop offset="0" stop-color="#8c8c8c"/><stop offset="1" stop-color="#686868"/></linearGradient></defs>
 <rect x="21.8" y="257.3" width="11.6" height="9.6" fill="url(#gg)" stroke="#d6d6d6" stroke-width="1.1"/>
 <path d="M38.5 267.8 V271 H35.3Z" fill="#c8c8c8"/>
 <ellipse cx="27.5" cy="285.5" rx="6.6" ry="5" fill="url(#gg)" stroke="#d6d6d6" stroke-width="1.1"/>
 <path d="M38.5 290.8 V294 H35.3Z" fill="#c8c8c8"/>
 <path d="M20.6 308.5 L23.8 303 H30.2 L33.4 308.5 L30.2 314 H23.8Z" fill="url(#gg)" stroke="#d6d6d6" stroke-width="1.1"/>
 <!-- pencil -->
 <path d="M20.8 338.8 L22 334.8 L29.8 327 L32.6 329.8 L24.8 337.6Z" fill="#bdbdbd"/><path d="M30.5 326.3 L31.6 325.2 Q32.4 324.6 33.2 325.4 L34.4 326.6 Q35 327.4 34.3 328.2 L33.3 329.1Z" fill="#e0e0e0"/><path d="M20.8 338.8 L21.5 336.5 L23.1 338.1Z" fill="#eee"/>
 <!-- brush with curve -->
 <path d="M35.8 349.2 L28.5 357" stroke="#d6d6d6" stroke-width="1.6" stroke-linecap="round"/><path d="M28.8 356.4 q-1.2 4 -5 4.2 q2 -1.3 2.2 -4.6 q1.2 -1.2 2.8 0.4Z" fill="#d6d6d6"/>
 <path d="M27 349.5 q-4 0.6 -5.5 3.6 q-1.4 3 -1.4 5.2 q0.4 2.2 3 2.2" fill="none" stroke="#d6d6d6" stroke-width="1.2"/>
 <!-- brush -->
 <path d="M34.8 372.3 L27 381" stroke="#d6d6d6" stroke-width="1.7" stroke-linecap="round"/><path d="M28.2 379.8 q-0.2 4.6 -8 4.4 q2.6 -1.2 3.4 -3.6 q0.8 -2.4 2.6 -2.8 q1.4 0.2 2 2Z" fill="#d6d6d6"/>
 <!-- bone -->
 <path d="M23.4 409.4 L31 401.8" stroke="#d6d6d6" stroke-width="2.6"/><g fill="#d6d6d6"><circle cx="22" cy="408.8" r="1.9"/><circle cx="24" cy="411" r="1.9"/><circle cx="30.4" cy="400.6" r="1.9"/><circle cx="32.6" cy="402.6" r="1.9"/></g>
 <path d="M38.5 411.8 V415 H35.3Z" fill="#c8c8c8"/>
 <!-- paint bucket -->
 <path d="M21 429.5 L27.4 425.2 L31.4 431.2 L25 435.6 Q22.4 436 21.4 433.6Z" fill="#d6d6d6"/><path d="M24.6 427 q-0.6 -4 1.6 -4.4 q1.8 0 2 3" fill="none" stroke="#d6d6d6" stroke-width="1.1"/><path d="M31.2 430 q3 0.6 3 3.4 q0 1.6 -1.3 1.6 q-1.3 0 -1.3 -1.6Z" fill="#d6d6d6"/>
 <!-- ink bottle -->
 <path d="M19.4 452 L24.6 448 L28 452.6 L22.8 456.6 Q20.6 457 19.6 455Z" fill="#d6d6d6"/><path d="M21.8 449.2 q-0.6 -3.2 1.2 -3.6 q1.6 0 2 2.2" fill="none" stroke="#d6d6d6" stroke-width="1.1"/>
 <path d="M27.4 452.4 H34.4 V460.4 H28.6 V456.6" fill="none" stroke="#d6d6d6" stroke-width="1.4"/>
 <!-- eyedropper -->
 <path d="M21.6 481.4 L22.4 478.6 L28.6 472.4 L30.6 474.4 L24.4 480.6Z" fill="none" stroke="#d6d6d6" stroke-width="1.1"/><path d="M27.8 471 L30.6 468.6 Q32.6 467.4 33.8 468.8 Q35 470.2 33.6 472 L31.4 474.6 L32 475.4 L30.6 476.6 L26.4 472.4 L27.4 471.2Z" fill="#d6d6d6"/>
 <!-- eraser -->
 <path d="M21.4 500 L27 493.8 H35 L29.4 500Z" fill="#e0e0e0"/><path d="M21.4 500.6 H29.4 V504.6 H21.4Z" fill="#b8b8b8"/><path d="M30 500.4 L35.2 494.6 V498.6 L30 504.4Z" fill="#9a9a9a"/>
 <!-- width tool -->
 <path d="M20 527 q3 -1.2 4.2 -4.2 q1.4 -3.6 3.6 -1 q2 2.6 4 1 q1.8 -1.6 3.4 -0.4" fill="none" stroke="#d6d6d6" stroke-width="1.7"/><path d="M21.8 516.8 q1.6 1.8 2.2 4 M26.6 515.4 q-0.6 2.4 -0.2 4.2" fill="none" stroke="#d6d6d6" stroke-width="1.2"/><circle cx="24.6" cy="522.4" r="1.6" fill="#444" stroke="#d6d6d6" stroke-width="0.9"/>
 <!-- camera dim -->
 <path d="M20 544.5 H29.6 V553.5 H20Z M30.2 548 L34.8 545 V553 L30.2 550Z" fill="#686868"/>
 <!-- hand -->
 <path d="M23 578.6 L20.6 573.4 Q20.2 572 21.6 572.4 L23.4 574.6 L22.6 567.8 Q23 566.6 24.2 567.4 L25.2 571.6 L25.6 566.2 Q26.4 565.2 27.2 566.2 L27.6 571.6 L29 567 Q30 566.2 30.6 567.4 L29.8 572.4 L31.8 569.4 Q33 569 32.8 570.4 L30.8 575.6 L30 578.6Z" fill="#d6d6d6"/>
 <path d="M38.5 577.8 V581 H35.3Z" fill="#c8c8c8"/>
 <!-- zoom -->
 <circle cx="25.4" cy="592.4" r="4.3" fill="#7a7a7a" stroke="#d6d6d6" stroke-width="1.5"/><path d="M28.8 596 L33.8 601.2" stroke="#d6d6d6" stroke-width="2.2" stroke-linecap="round"/>
 <!-- stroke pencil -->
 <path d="M22.6 629.6 L23.4 626.8 L29 621.2 L31 623.2 L25.4 628.8Z" fill="#c4c4c4"/><path d="M29.8 620.4 L30.6 619.6 Q31.4 619 32.2 619.8 L32.8 620.4 Q33.4 621.2 32.8 622 L32 622.8Z" fill="#e4e4e4"/>
 <rect x="19.5" y="635.5" width="16" height="16" fill="#00ee14"/>
 <rect x="19.5" y="659" width="16" height="15" fill="#262626" stroke="#1c1c1c" stroke-width="0.8"/>
 <path d="M23.2 666.6 L27.4 663.6 L30.2 667.6 L26 670.6 Q24.2 671 23.4 669.4Z" fill="#d6d6d6"/><path d="M25.4 664.6 q-0.4 -2.8 1 -3 q1.4 0 1.4 2" fill="none" stroke="#d6d6d6" stroke-width="0.9"/><path d="M30 667 q2.2 0.6 2 3.4 q-0.2 1 -1 1 q-0.9 0 -0.9 -1.2Z" fill="#d6d6d6"/>
 <rect x="19.5" y="677" width="16" height="14" fill="#089c10"/>
</svg>
<div class="t" style="left:21px;top:206px;font-size:17px;font-family:'Liberation Serif',serif;color:#d8d8d8">T</div>

<!-- edit bar right -->
<svg style="left:540px;top:202px" width="160" height="21" viewBox="540 202 160 21">
 <path d="M544 216.5 H549 L546.5 219.5Z" fill="#d0d0d0"/>
 <path d="M556.5 216.5 L563 206.5 L565 216.5Z" fill="none" stroke="#cfcfcf" stroke-width="1.1"/><rect x="563.5" y="210" width="5" height="5" fill="#444" stroke="#cfcfcf" stroke-width="0.9"/><circle cx="562" cy="215" r="2.6" fill="#cfcfcf"/>
 <path d="M570.5 216.5 H575.5 L573 219.5Z" fill="#d0d0d0"/>
 <circle cx="589.7" cy="213" r="3.6" fill="none" stroke="#d6d6d6" stroke-width="1.2"/><path d="M589.7 207 V219 M583.7 213 H595.7" stroke="#d6d6d6" stroke-width="1.2"/>
 <rect x="605.5" y="208" width="10" height="10" fill="none" stroke="#bdbdbd" stroke-width="0.9" stroke-dasharray="1 1"/><rect x="607.8" y="210.3" width="5.4" height="5.4" fill="none" stroke="#d6d6d6" stroke-width="1.1"/>
 <rect x="627.5" y="206.5" width="64" height="13" fill="#3a3a3a" stroke="#2a2a2a" stroke-width="1"/>
 <rect x="628" y="207" width="48" height="12" fill="#a4a4a4"/>
 <path d="M680 211 H688 L684 216Z" fill="#e6e6e6"/>
</svg>
<div class="t" style="left:631px;top:208.5px;font-size:9.6px;color:#151515">100%</div>
<!-- context menu -->
<div id="menu" class="a">
<div class="a" style="left:0;top:0;width:242px;height:446px;background:linear-gradient(#c8c8c8 0,#c9c9c9 185px,#cfcfcf 200px,#dadada 214px,#e6e6e6 230px,#eeeeee 246px,#f0f0f0 262px,#f0f0f0 446px)"></div>
<div class="a" style="left:-120px;top:272px;width:239px;height:280px;background:#98e69e;filter:blur(19px)"></div>
<div class="mi d" style="top:2.0px;letter-spacing:-0.20px">Create Motion Tween</div>
<div class="mi d" style="top:17.8px;letter-spacing:-0.30px">Create Shape Tween</div>
<div class="mi d" style="top:33.6px;letter-spacing:-0.27px">Create Classic Tween</div>
<div class="mi d" style="top:49.6px;letter-spacing:-0.11px">Convert to Frame-by-Frame Animation</div>
<div class="sep" style="top:70.1px"></div>
<div class="mi" style="top:74.9px;letter-spacing:-0.23px">Insert Frame</div>
<div class="mi d" style="top:91.2px;letter-spacing:-0.49px">Remove Frames</div>
<div class="sep" style="top:111.3px"></div>
<div class="mi" style="top:116.9px;letter-spacing:-0.15px">Insert Keyframe</div>
<div class="mi" style="top:132.8px;letter-spacing:-0.21px">Insert Blank Keyframe</div>
<div class="mi d" style="top:148.7px;letter-spacing:-0.28px">Clear Keyframe</div>
<div class="mi" style="top:164.5px;letter-spacing:-0.15px">Convert to Keyframes</div>
<div class="mi" style="top:180.4px;letter-spacing:-0.18px">Convert to Blank Keyframes</div>
<div class="sep" style="top:201.1px"></div>
<div class="mi d" style="top:206.5px;letter-spacing:-0.26px">Cut Frames</div>
<div class="mi d" style="top:222.3px;letter-spacing:-0.33px">Copy Frames</div>
<div class="mi d" style="top:238.1px;letter-spacing:-0.38px">Paste Frames</div>
<div class="mi d" style="top:253.9px;letter-spacing:-0.25px">Paste and Overwrite Frames</div>
<div class="mi d" style="top:269.7px;letter-spacing:-0.36px">Clear Frames</div>
<div class="mi" style="top:285.5px;letter-spacing:-0.18px">Select All Frames</div>
<div class="sep" style="top:305.9px"></div>
<div class="mi d" style="top:311.7px;letter-spacing:-0.14px">Copy Motion</div>
<div class="mi d" style="top:327.5px;letter-spacing:-0.20px">Paste Motion</div>
<div class="mi d" style="top:343.3px;letter-spacing:-0.19px">Paste Motion Special...</div>
<div class="sep" style="top:363.7px"></div>
<div class="mi d" style="top:369.2px;letter-spacing:-0.41px">Reverse Frames</div>
<div class="mi d" style="top:385.0px;letter-spacing:-0.19px">Synchronize Symbols</div>
<div class="mi d" style="top:400.8px;letter-spacing:-0.10px">Split Audio</div>
<div class="sep" style="top:421.2px"></div>
<div class="mi" style="top:426.6px;letter-spacing:-0.06px">Actions</div>
</div>
<!-- arrows -->
<svg style="left:0;top:0" width="700" height="691" viewBox="0 0 700 691">
 <path d="M389.05 8.75 L326.6 57.7 L321.7 53.6 L319.4 67.0 L332.4 66.2 L329.95 61.7 L389.95 9.85 Z" fill="#e5372d"/>
 <path d="M655.4 167.7 L434.7 197.7 L432.0 194.0 L424.2 202.2 L433.8 208.8 L435.5 203.5 L655.7 169.7 Z" fill="#e5372d"/>
</svg>
</body></html>
